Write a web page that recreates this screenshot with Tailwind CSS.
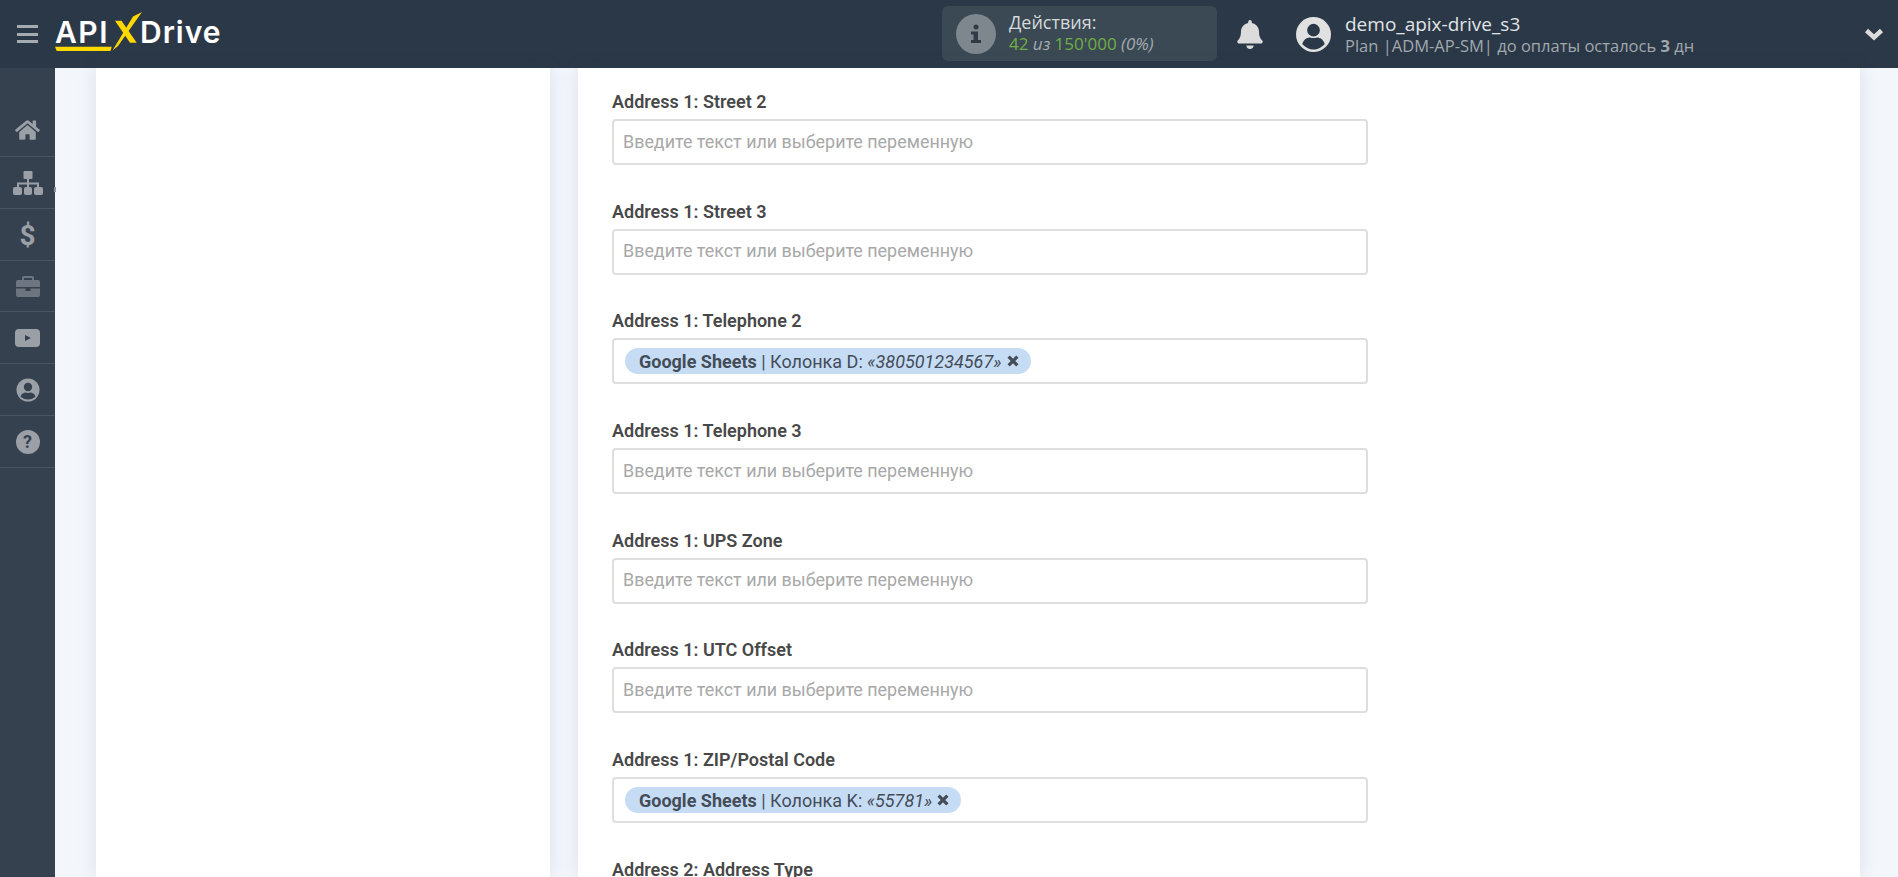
<!DOCTYPE html>
<html lang="en">
  <head>
    <meta charset="UTF-8" />
    <title>ApiX-Drive</title>
    <script src="https://cdn.jsdelivr.net/npm/@tailwindcss/browser@4"></script>
  </head>
  <body class="h-[877px] overflow-hidden bg-[#f3f6fb] font-['Roboto',sans-serif]">
    <!-- top bar -->
    <header class="flex h-[68px] items-center bg-[#2b3847] font-['Open_Sans',sans-serif]">
      <button class="ml-[17px] flex h-[18px] w-[21px] flex-col justify-between">
        <span class="h-[3px] bg-[#a5abb2]"></span>
        <span class="h-[3px] bg-[#a5abb2]"></span>
        <span class="h-[3px] bg-[#a5abb2]"></span>
      </button>
      <div class="relative ml-[17px] h-[42px] w-[170px] font-['Inter',sans-serif] text-[30px] font-semibold leading-[42px] text-white">
        <span class="absolute left-0 top-[-2px] tracking-[1.500px]">API</span>
        <span class="absolute left-[85px] top-[-2px] tracking-[1px]">Drive</span>
        <svg class="absolute left-0 top-0 overflow-visible" width="100" height="42" viewBox="0 0 100 42">
          <path d="M0 33.700H56.700L55.500 38H1.700Z" fill="#ffd800" />
          <path d="M57.500 37.500L78 3.500 87 -1 63 33Z" fill="#ffd800" />
          <path d="M60 7.700H66.500L81.700 29.700H75Z" fill="#ffd800" />
        </svg>
      </div>
      <div class="mb-[1px] ml-[717px] flex h-[55px] w-[275px] items-center rounded-md bg-[#3b4954]">
        <span class="ml-[14px] flex h-[40px] w-[40px] items-center justify-center rounded-full bg-[#7f878e]">
          <svg width="12" height="20" viewBox="0 0 12 20" fill="#2f3c48">
            <circle cx="6" cy="3" r="2.500" />
            <path d="M1 7.500H8V16H11V19H1V16H3.500V10.500H1Z" />
          </svg>
        </span>
        <div class="ml-[13px] pb-[2px] leading-[22px]">
          <div class="text-[18px] text-[#d6d9db]">Действия:</div>
          <div class="text-[17px] text-[#6fae42]">42 <i class="text-[#a4abb0]">из</i> 150'000 <i class="text-[#a4abb0]">(0%)</i></div>
        </div>
      </div>
      <svg class="ml-[20px]" width="26" height="29" viewBox="0 0 448 512" fill="#dcdcdc">
        <path d="M224 512c35 0 64-29 64-64H160c0 35 29 64 64 64zm216-150c-19-21-56-52-56-154 0-78-54-140-128-155V32a32 32 0 1 0-64 0v21C118 68 64 130 64 208c0 102-37 133-56 154-6 6-8 14-8 22 0 16 13 32 32 32h384c19 0 32-16 32-32 0-8-2-16-8-22z" />
      </svg>
      <svg class="ml-[33px]" width="35" height="35" viewBox="0 0 36 36">
        <circle cx="18" cy="18" r="18" fill="#e1e1e1" />
        <circle cx="18" cy="13.500" r="6.500" fill="#2b3847" />
        <path d="M6.500 28c1-5 5-7 8-7 1.500.7 5.500.7 7 0 3 0 7 2 8 7-3 3-7 5.500-11.500 5.500S9.500 31 6.500 28Z" fill="#2b3847" />
      </svg>
      <div class="ml-[14px] flex-1">
        <div class="text-[19px] leading-[24px] text-[#e1e4e6]">demo_apix-drive_s3</div>
        <div class="text-[16.500px] leading-[20px] text-[#a1a8ae]">Plan |ADM-AP-SM| до оплаты осталось <b>3</b> дн</div>
      </div>
      <svg class="mr-[14px]" width="20" height="14" viewBox="0 0 20 14" fill="none" stroke="#dcdcdc" stroke-width="4.500">
        <path d="M2.500 3.500L10 10.500 17.500 3.500" />
      </svg>
    </header>

    <div class="flex h-[809px]">
      <!-- side menu -->
      <nav class="w-[55px] shrink-0 bg-[#364150]">
        <a class="flex h-[89px] items-end justify-center border-b border-[#4a5563] pb-[15px]">
          <svg width="27" height="22" viewBox="0 0 576 512" fill="#9ba0a7"><path d="M280 148L96 300v164a16 16 0 0 0 16 16l112-1a16 16 0 0 0 16-16V368a16 16 0 0 1 16-16h64a16 16 0 0 1 16 16v95a16 16 0 0 0 16 17l112 0a16 16 0 0 0 16-16V300L296 148a12 12 0 0 0-16 0zM572 251l-84-69V44a12 12 0 0 0-12-12h-56a12 12 0 0 0-12 12v72l-90-74a48 48 0 0 0-61 0L4 251a12 12 0 0 0-2 17l26 31a12 12 0 0 0 17 2L280 107a12 12 0 0 1 16 0l235 194a12 12 0 0 0 17-2l26-31a12 12 0 0 0-2-17z" /></svg>
        </a>
        <a class="relative flex h-[52px] items-center justify-center border-b border-[#4a5563]">
          <svg width="30" height="24" viewBox="0 0 30 24" fill="#9ba0a7"><rect x="10.500" y="0" width="9" height="8" rx="1" /><path d="M14 8h2v3.500h10V16h-2v-2.500H16V16h-2v-2.500H6V16H4v-4.500h10Z" /><rect x="0" y="16" width="9" height="8" rx="2" /><rect x="11" y="16" width="8" height="8" rx="2" /><rect x="21" y="16" width="9" height="8" rx="2" /></svg>
          <span class="absolute right-[-1px] top-[30px] h-[5px] w-[2px] bg-[#8e949c]"></span>
        </a>
        <a class="flex h-[52px] items-center justify-center border-b border-[#4a5563] pt-[2px] text-[28px] font-bold leading-none text-[#9ba0a7]">$</a>
        <a class="flex h-[51px] items-center justify-center border-b border-[#4a5563]">
          <svg width="24" height="21" viewBox="0 0 24 21" fill="#6d7680"><path d="M8 0h8a2 2 0 0 1 2 2v2h4a2 2 0 0 1 2 2v5H0V6a2 2 0 0 1 2-2h4V2a2 2 0 0 1 2-2Zm0 2v2h8V2ZM0 12.500h9.500V15h5v-2.500H24V19a2 2 0 0 1-2 2H2a2 2 0 0 1-2-2Z" /></svg>
        </a>
        <a class="flex h-[52px] items-center justify-center border-b border-[#4a5563]">
          <svg width="25" height="18" viewBox="0 0 25 18"><rect width="25" height="18" rx="4" fill="#9ba0a7" /><path d="M10 6L16 9 10 12Z" fill="#364150" /></svg>
        </a>
        <a class="flex h-[52px] items-center justify-center border-b border-[#4a5563]">
          <svg width="24" height="24" viewBox="0 0 24 24"><circle cx="12" cy="12" r="11.500" fill="#9ba0a7" /><circle cx="12" cy="9" r="4.200" fill="#364150" /><path d="M4.500 18.500c1-3 3.500-4 5-4 1.500.6 3.500.6 5 0 1.500 0 4 1 5 4-2 2-4.500 3-7.500 3s-5.500-1-7.500-3Z" fill="#364150" /></svg>
        </a>
        <a class="flex h-[52px] items-center justify-center border-b border-[#4a5563]">
          <span class="flex h-[24px] w-[24px] items-center justify-center rounded-full bg-[#9ba0a7] text-[18px] font-bold text-[#364150]">?</span>
        </a>
      </nav>

      <!-- page -->
      <main class="flex flex-1 gap-[28px] pl-[41px] pr-[38px]">
        <aside class="w-[454px] shrink-0 bg-white shadow-[0_0_18px_rgba(60,80,110,0.12)]"></aside>
        <section class="flex-1 bg-white px-[34px] pt-[17px] shadow-[0_0_18px_rgba(60,80,110,0.12)]">
          <div class="h-[109.700px]">
            <label class="block text-[18px] leading-[33px] font-semibold text-[#484848]">Address 1: Street 2</label>
            <div class="mt-[1px] flex h-[46px] w-[756px] items-center rounded-[4px] border-2 border-[#dedede] px-[9px] text-[17.900px] text-[#a8a8a8]">Введите текст или выберите переменную</div>
          </div>
          <div class="h-[109.700px]">
            <label class="block text-[18px] leading-[33px] font-semibold text-[#484848]">Address 1: Street 3</label>
            <div class="mt-[1px] flex h-[46px] w-[756px] items-center rounded-[4px] border-2 border-[#dedede] px-[9px] text-[17.900px] text-[#a8a8a8]">Введите текст или выберите переменную</div>
          </div>
          <div class="h-[109.700px]">
            <label class="block text-[18px] leading-[33px] font-semibold text-[#484848]">Address 1: Telephone 2</label>
            <div class="mt-[1px] flex h-[46px] w-[756px] items-center rounded-[4px] border-2 border-[#dedede] px-[11px] text-[18px] text-[#444c58]">
              <span class="flex h-[26px] items-center rounded-[13px] bg-[#c6dcf5] pl-[14px] pr-[12px]"><b class="font-bold">Google Sheets</b>&nbsp;| Колонка D:&nbsp;<i>«380501234567»</i>
                <svg class="ml-[5px]" width="12" height="12" viewBox="0 0 11 11" fill="none" stroke="#444c58" stroke-width="3"><path d="M1.500 1.500L9.500 9.500M9.500 1.500L1.500 9.500" /></svg>
              </span>
            </div>
          </div>
          <div class="h-[109.700px]">
            <label class="block text-[18px] leading-[33px] font-semibold text-[#484848]">Address 1: Telephone 3</label>
            <div class="mt-[1px] flex h-[46px] w-[756px] items-center rounded-[4px] border-2 border-[#dedede] px-[9px] text-[17.900px] text-[#a8a8a8]">Введите текст или выберите переменную</div>
          </div>
          <div class="h-[109.700px]">
            <label class="block text-[18px] leading-[33px] font-semibold text-[#484848]">Address 1: UPS Zone</label>
            <div class="mt-[1px] flex h-[46px] w-[756px] items-center rounded-[4px] border-2 border-[#dedede] px-[9px] text-[17.900px] text-[#a8a8a8]">Введите текст или выберите переменную</div>
          </div>
          <div class="h-[109.700px]">
            <label class="block text-[18px] leading-[33px] font-semibold text-[#484848]">Address 1: UTC Offset</label>
            <div class="mt-[1px] flex h-[46px] w-[756px] items-center rounded-[4px] border-2 border-[#dedede] px-[9px] text-[17.900px] text-[#a8a8a8]">Введите текст или выберите переменную</div>
          </div>
          <div class="h-[109.700px]">
            <label class="block text-[18px] leading-[33px] font-semibold text-[#484848]">Address 1: ZIP/Postal Code</label>
            <div class="mt-[1px] flex h-[46px] w-[756px] items-center rounded-[4px] border-2 border-[#dedede] px-[11px] text-[18px] text-[#444c58]">
              <span class="flex h-[26px] items-center rounded-[13px] bg-[#c6dcf5] pl-[14px] pr-[12px]"><b class="font-bold">Google Sheets</b>&nbsp;| Колонка K:&nbsp;<i>«55781»</i>
                <svg class="ml-[5px]" width="12" height="12" viewBox="0 0 11 11" fill="none" stroke="#444c58" stroke-width="3"><path d="M1.500 1.500L9.500 9.500M9.500 1.500L1.500 9.500" /></svg>
              </span>
            </div>
          </div>
          <label class="block text-[18px] leading-[33px] font-semibold text-[#484848]">Address 2: Address Type</label>
        </section>
      </main>
    </div>
  </body>
</html>
